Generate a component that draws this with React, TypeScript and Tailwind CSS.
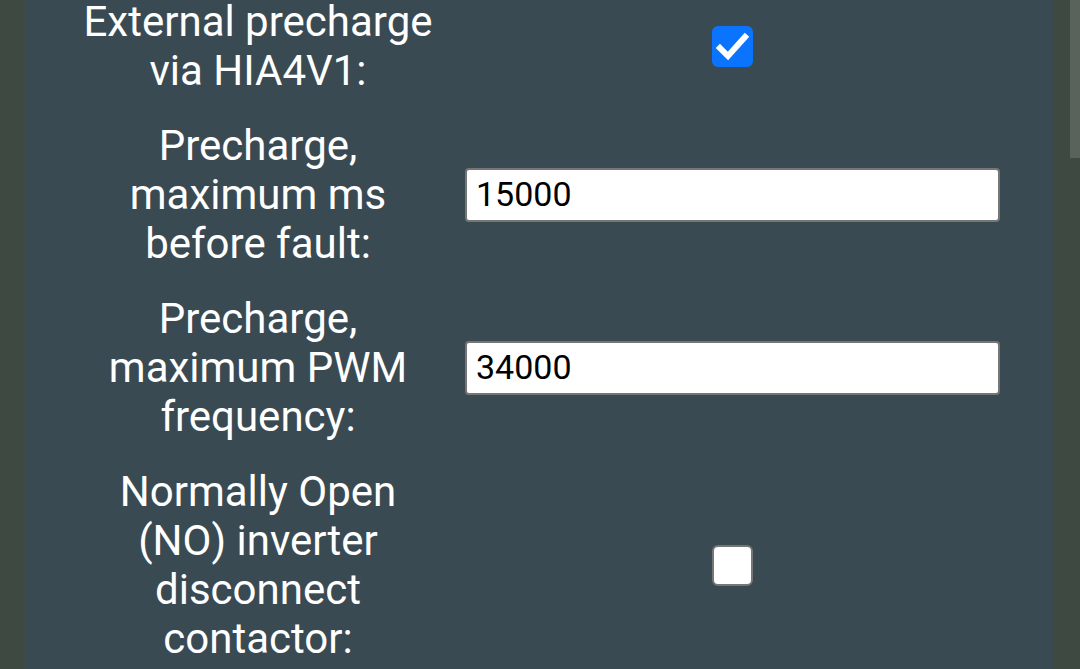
import React from "react";

function Checked() {
  return (
    <div className="w-[41px] h-[41px] rounded-[6px] bg-[#0b74fe] flex items-center justify-center">
      <svg width="41" height="41" viewBox="0 0 41 41">
        <path d="M8 22 L16 30 L33 11" fill="none" stroke="#fff" strokeWidth="6" strokeLinecap="square" strokeLinejoin="miter" />
      </svg>
    </div>
  );
}

function Unchecked() {
  return <div className="w-[41px] h-[41px] rounded-[6px] bg-white border-2 border-[#767676]" />;
}

function Input({ value }: { value: string }) {
  return (
    <div className="w-full h-[54px] bg-white border-2 border-[#767676] rounded-[4px] flex items-center pl-[9px] text-[34px] text-black" style={{ fontFamily: "Roboto, sans-serif" }}>
      {value}
    </div>
  );
}

const rows: { label: string[]; control: React.ReactNode }[] = [
  { label: ["External precharge", "via HIA4V1:"], control: <Checked /> },
  { label: ["Precharge,", "maximum ms", "before fault:"], control: <Input value="15000" /> },
  { label: ["Precharge,", "maximum PWM", "frequency:"], control: <Input value="34000" /> },
  { label: ["Normally Open", "(NO) inverter", "disconnect", "contactor:"], control: <Unchecked /> },
];

export default function App() {
  return (
    <div className="w-[1080px] h-[669px] overflow-hidden bg-[#3e4a41] flex" style={{ fontFamily: "Roboto, sans-serif" }}>
      <div className="w-[25px] shrink-0" />
      <div className="w-[1029px] h-full bg-[#3a4a53] pl-[26px] pr-[54px]">
        <div className="mt-[-16px] flex flex-col">
          {rows.map((r, i) => (
            <div key={i} className="flex items-center py-[13px]">
              <div className="w-[414px] shrink-0 text-center text-white text-[42px] leading-[49px]">
                {r.label.map((l, j) => (
                  <div key={j}>{l}</div>
                ))}
              </div>
              <div className="flex-1 flex justify-center">{r.control}</div>
            </div>
          ))}
        </div>
      </div>
      <div className="w-[16px] shrink-0" />
      <div className="w-[10px] shrink-0 flex flex-col">
        <div className="h-[158px] bg-[#59625b]" />
      </div>
    </div>
  );
}
